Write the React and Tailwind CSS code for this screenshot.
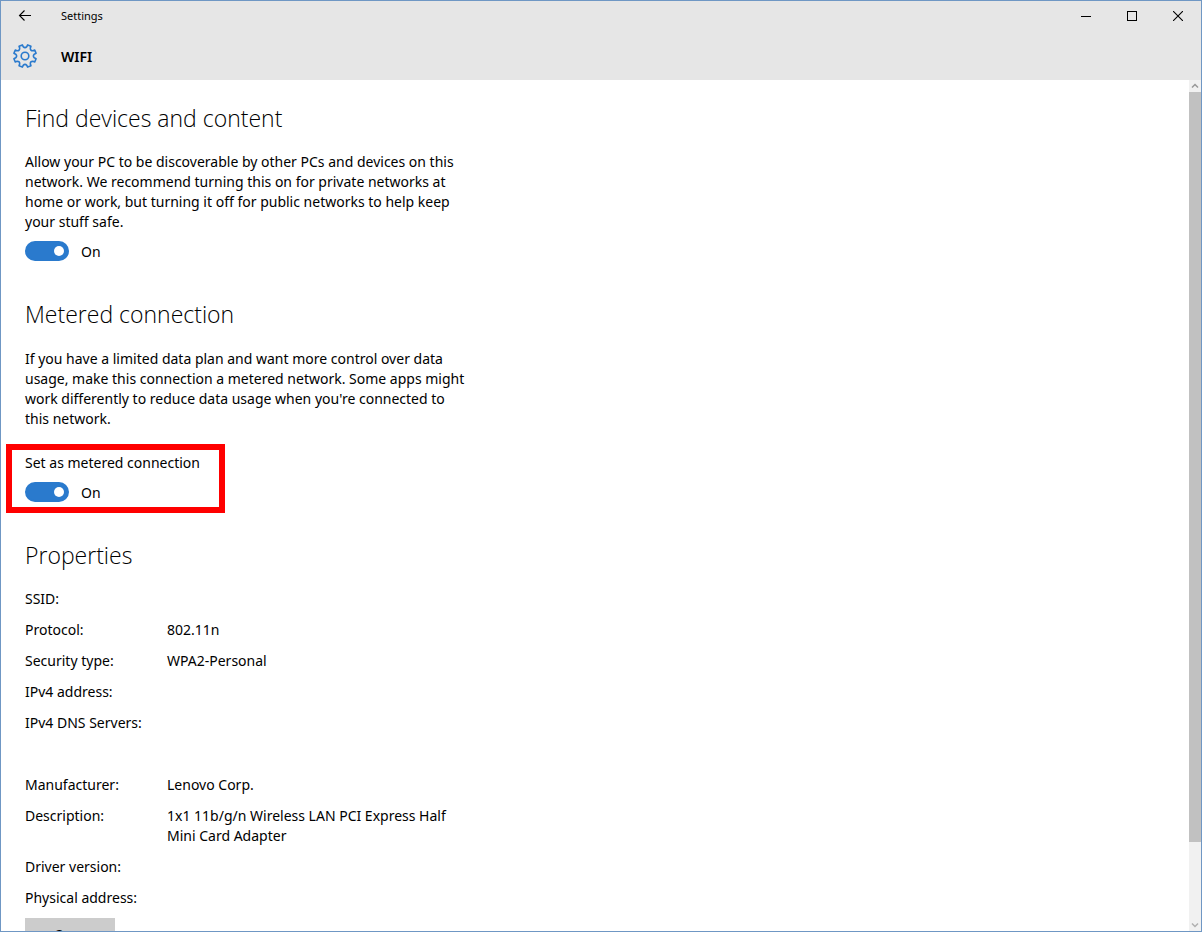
import React from "react";

const gearPath = (() => {
  const at = (degrees, radius) => {
    const a = (degrees * Math.PI) / 180;
    return `${(13 + radius * Math.cos(a)).toFixed(2)} ${(13 + radius * Math.sin(a)).toFixed(2)}`;
  };
  let path = "";
  for (let i = 0; i < 8; i++) {
    const mid = i * 45 + 22.5;
    path += `${i === 0 ? "M" : "L"}${at(mid - 9, 11.4)}L${at(mid + 9, 11.4)}L${at(mid + 11.5, 9.5)}`;
    path += `Q${at(mid + 22.5, 7.4)} ${at(mid + 33.5, 9.5)}`;
  }
  return `${path}Z`;
})();

function Toggle({ id, label }) {
  return (
    <div className="flex h-5 items-center gap-3">
      <input
        id={id}
        type="checkbox"
        role="switch"
        defaultChecked
        aria-label={label}
        className="flex h-5 w-11 shrink-0 appearance-none items-center rounded-full border-2 border-[#333333] px-[3px] before:size-[10px] before:rounded-full before:bg-[#333333] checked:justify-end checked:border-[#2a7acd] checked:bg-[#2a7acd] checked:before:bg-white"
      />
      <label htmlFor={id} className="pt-0.5">On</label>
    </div>
  );
}

function Heading({ children }) {
  return <h2 className="font-['Open_Sans','Noto_Sans',sans-serif] text-[23px] leading-8 font-light">{children}</h2>;
}

const properties = [
  ["SSID:", ""],
  ["Protocol:", "802.11n"],
  ["Security type:", "WPA2-Personal"],
  ["IPv4 address:", ""],
  ["IPv4 DNS Servers:", ""],
  ["", ""],
  ["Manufacturer:", "Lenovo Corp."],
  ["Description:", "1x1 11b/g/n Wireless LAN PCI Express Half Mini Card Adapter"],
  ["Driver version:", ""],
  ["Physical address:", ""],
];

export default function App() {
  return (
    <div className="flex h-screen flex-col overflow-hidden border border-[#6f97c4] bg-white font-['Noto_Sans','Open_Sans',sans-serif] text-[14px] leading-5 text-black">
      <header className="shrink-0 bg-[#e6e6e6] pb-[11px]">
        <div className="flex h-[30px] items-center">
          <button aria-label="Back" className="flex h-full w-12 items-center justify-center">
            <svg width="14" height="14" viewBox="0 0 14 14" fill="none" stroke="currentColor" strokeWidth="1.1">
              <path d="M13 6.5H1.5M6.5 1.5L1.5 6.5L6.5 11.5" />
            </svg>
          </button>
          <span className="flex-1 pl-3 text-[11px]">Settings</span>
          <button aria-label="Minimize" className="flex h-full w-[46px] items-center justify-center">
            <svg width="10" height="10" viewBox="0 0 10 10" stroke="currentColor" shapeRendering="crispEdges">
              <path d="M0 5.5H10" />
            </svg>
          </button>
          <button aria-label="Maximize" className="flex h-full w-[46px] items-center justify-center">
            <svg width="10" height="10" viewBox="0 0 10 10" fill="none" stroke="currentColor" shapeRendering="crispEdges">
              <path d="M.5 .5H9.5V9.5H.5Z" />
            </svg>
          </button>
          <button aria-label="Close" className="flex h-full w-[46px] items-center justify-center">
            <svg width="10" height="10" viewBox="0 0 10 10" stroke="currentColor" strokeWidth="1.1">
              <path d="M0 0L10 10M10 0L0 10" />
            </svg>
          </button>
        </div>
        <div className="flex items-center pt-3">
          <div className="flex w-12 justify-center">
            <svg width="26" height="26" viewBox="0 0 26 26" fill="none" stroke="#2a7acd" strokeWidth="1.6" strokeLinejoin="round">
              <path d={gearPath} />
              <circle cx="13" cy="13" r="3.8" />
            </svg>
          </div>
          <h1 className="pt-0.5 pl-3 text-[14px] font-semibold">WIFI</h1>
        </div>
      </header>

      <div className="flex min-h-0 flex-1">
        <main className="min-w-0 flex-1 overflow-hidden px-6 pt-[22px]">
          <section>
            <Heading>Find devices and content</Heading>
            <p className="mt-[18px] mb-[9px] max-w-[444px]">
              Allow your PC to be discoverable by other PCs and devices on this network. We recommend turning this on for
              private networks at home or work, but turning it off for public networks to help keep your stuff safe.
            </p>
            <Toggle id="discoverable" label="Find devices and content" />
          </section>

          <section className="mt-[37px]">
            <Heading>Metered connection</Heading>
            <p className="mt-[19px] max-w-[444px]">
              If you have a limited data plan and want more control over data usage, make this connection a metered
              network. Some apps might work differently to reduce data usage when you're connected to this network.
            </p>
            <div className="-ml-[19px] mt-[15px] w-[219px] border-6 border-[#ff0000] px-[13px] pt-[3px] pb-[5px]">
              <p className="mb-[9px] whitespace-nowrap">Set as metered connection</p>
              <Toggle id="metered" label="Set as metered connection" />
            </div>
          </section>

          <section className="mt-[26px]">
            <Heading>Properties</Heading>
            <dl className="mt-[18px] flex max-w-[444px] flex-col gap-[11px]">
              {properties.map(([name, value], i) => (
                <div key={i} className="grid min-h-5 grid-cols-[142px_1fr]">
                  <dt>{name}</dt>
                  <dd>{value}</dd>
                </div>
              ))}
            </dl>
            <button className="mt-[10px] h-[34px] w-[90px] bg-[#cccccc]">Copy</button>
          </section>
        </main>

        <div className="flex w-3 shrink-0 flex-col bg-[#f1f1f1]">
          <button aria-label="Scroll up" className="flex h-3 items-center justify-center">
            <svg width="8" height="6" viewBox="0 0 8 6" fill="none" stroke="#999999" strokeWidth="1.5">
              <path d="M1 4.5L4 1.5L7 4.5" />
            </svg>
          </button>
          <div className="flex-[39] bg-[#c1c1c1]" />
          <div className="flex-[4]" />
          <button aria-label="Scroll down" className="flex h-3 items-center justify-center">
            <svg width="8" height="6" viewBox="0 0 8 6" fill="none" stroke="#b0b0b0" strokeWidth="1.5">
              <path d="M1 1.5L4 4.5L7 1.5" />
            </svg>
          </button>
        </div>
      </div>
    </div>
  );
}
